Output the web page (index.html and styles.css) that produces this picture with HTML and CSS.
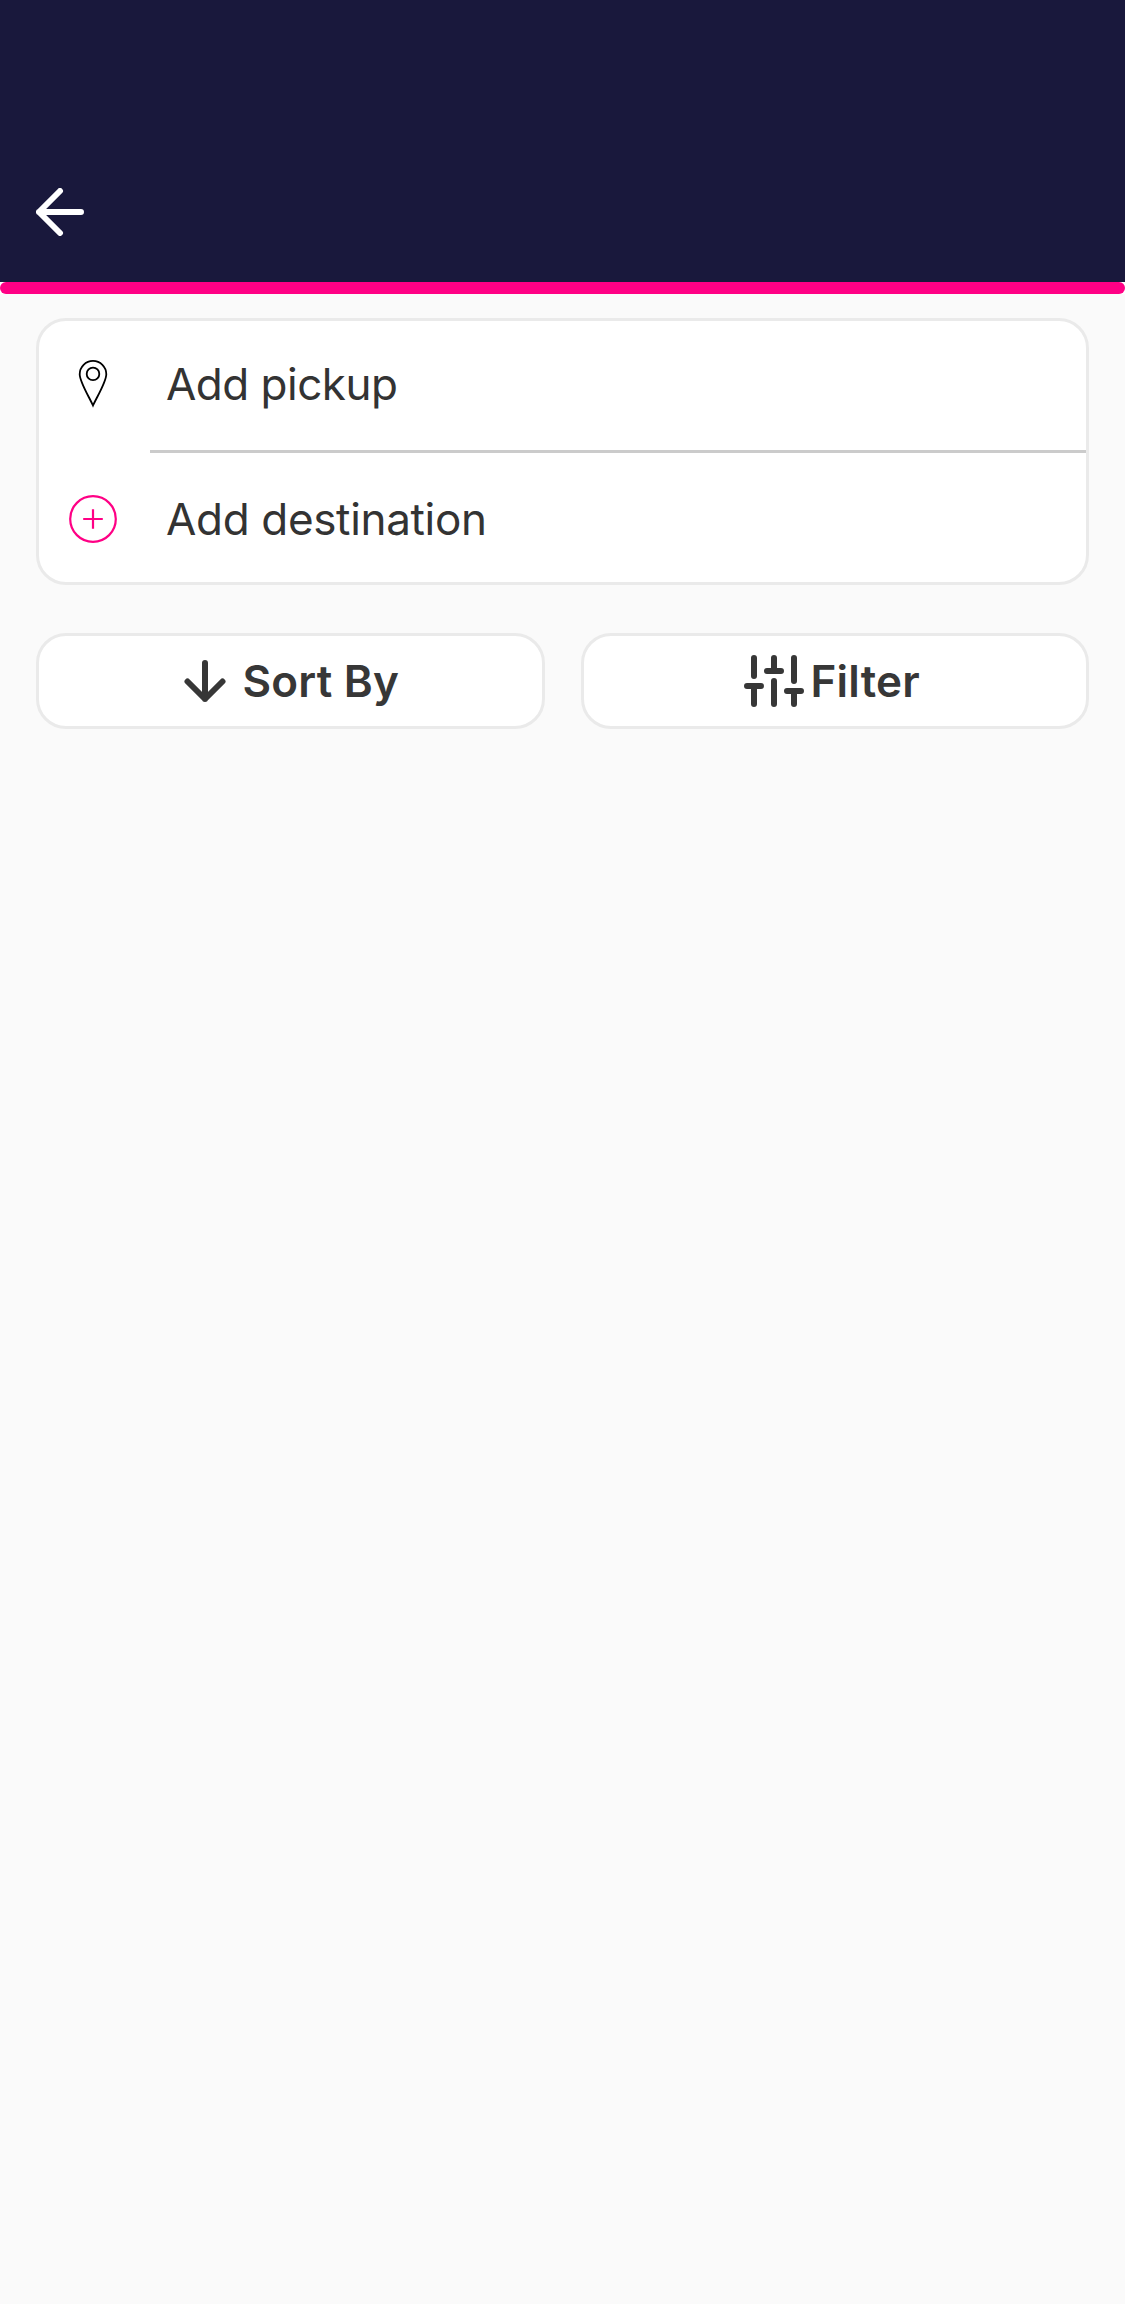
FILE: index.html
```
<!DOCTYPE html>
<html lang="en">
<head>
<meta charset="utf-8">
<title>Add pickup</title>
<link rel="stylesheet" href="styles.css">
</head>
<body>
<header class="header">
  <svg class="back" viewBox="0 0 48 48"><path d="M45 24H3M24 3L3 24L24 45"/></svg>
</header>
<div class="progress-track"><div class="progress"></div></div>
<main class="content">
  <section class="route">
    <div class="row pickup">
      <div class="row-icon">
        <svg class="pin" viewBox="0 0 48 48"><path d="M24 45.500C20.500 37.500 10.700 22 10.700 14.200A13.300 13.300 0 0 1 37.300 14.200C37.300 22 27.500 37.500 24 45.500Z"/><circle cx="24" cy="13.900" r="6.300"/></svg>
      </div>
      <div class="row-text">Add pickup</div>
    </div>
    <div class="divider"></div>
    <div class="row destination">
      <div class="row-icon">
        <svg class="plus" viewBox="0 0 48 48"><circle cx="24" cy="24" r="22.800"/><path d="M24 14.200V33.800M14.200 24H33.800"/></svg>
      </div>
      <div class="row-text">Add destination</div>
    </div>
  </section>
  <div class="actions">
    <div class="button sort">
      <svg class="arrow-down" viewBox="0 0 42 42"><path d="M21 3V39M3.500 21.500L21 39L38.500 21.500"/></svg>
      <span>Sort By</span>
    </div>
    <div class="button filter">
      <svg class="sliders" viewBox="0 0 60 52"><path d="M10 3V21M10 31V49M3 31H17M30 3V16M23 16H37M30 26V49M50 3V26M50 36V49M43 36H57"/></svg>
      <span>Filter</span>
    </div>
  </div>
</main>
</body>
</html>
```
FILE: styles.css
```
* {
  box-sizing: border-box;
}

body {
  margin: 0;
  min-height: 2304px;
  background: #fafafa;
  color: #333;
  font-family: Inter, "Liberation Sans", sans-serif;
  font-size: 44px;
}

svg {
  display: block;
  flex: none;
  fill: none;
  stroke-linecap: round;
  stroke-linejoin: round;
}

.header {
  height: 282px;
  padding: 188px 36px 0;
  background: #19183c;
}

.back {
  width: 48px;
  height: 48px;
  stroke: #fff;
  stroke-width: 6;
}

.progress-track {
  background: #fff;
}

.progress {
  height: 12px;
  border-radius: 6px;
  background: #ff0085;
}

.content {
  padding: 24px 36px;
}

.route {
  border: 3px solid #eaeaea;
  border-radius: 30px;
  background: #fff;
}

.row {
  display: flex;
  align-items: center;
  height: 129px;
}

.pickup {
  padding-bottom: 3px;
  letter-spacing: -0.5px;
}

.destination {
  padding-top: 3px;
  letter-spacing: -0.33px;
}

.row-icon {
  display: flex;
  justify-content: center;
  width: 108px;
}

.row-text {
  padding-left: 19px;
  line-height: 54px;
}

.divider {
  height: 3px;
  margin-left: 111px;
  background: #cbcbcb;
}

.pin,
.plus {
  width: 48px;
  height: 48px;
}

.pin {
  stroke: #000;
  stroke-width: 1.8;
  stroke-linejoin: miter;
}

.plus {
  stroke: #ff0085;
  stroke-width: 2.2;
  stroke-linecap: butt;
}

.actions {
  display: grid;
  grid-template-columns: 1fr 1fr;
  gap: 36px;
  margin-top: 48px;
}

.button {
  display: flex;
  align-items: center;
  justify-content: center;
  height: 96px;
  border: 3px solid #eaeaea;
  border-radius: 30px;
  background: #fff;
  color: #373737;
  font-weight: 600;
  letter-spacing: 0.22px;
}

.sort {
  padding-left: 3px;
}

.filter {
  padding-right: 6px;
}

.arrow-down,
.sliders {
  stroke: #373737;
  stroke-width: 6;
}

.arrow-down {
  width: 42px;
  height: 42px;
  margin-right: 16px;
}

.sliders {
  width: 60px;
  height: 52px;
  margin-right: 7px;
}
```
